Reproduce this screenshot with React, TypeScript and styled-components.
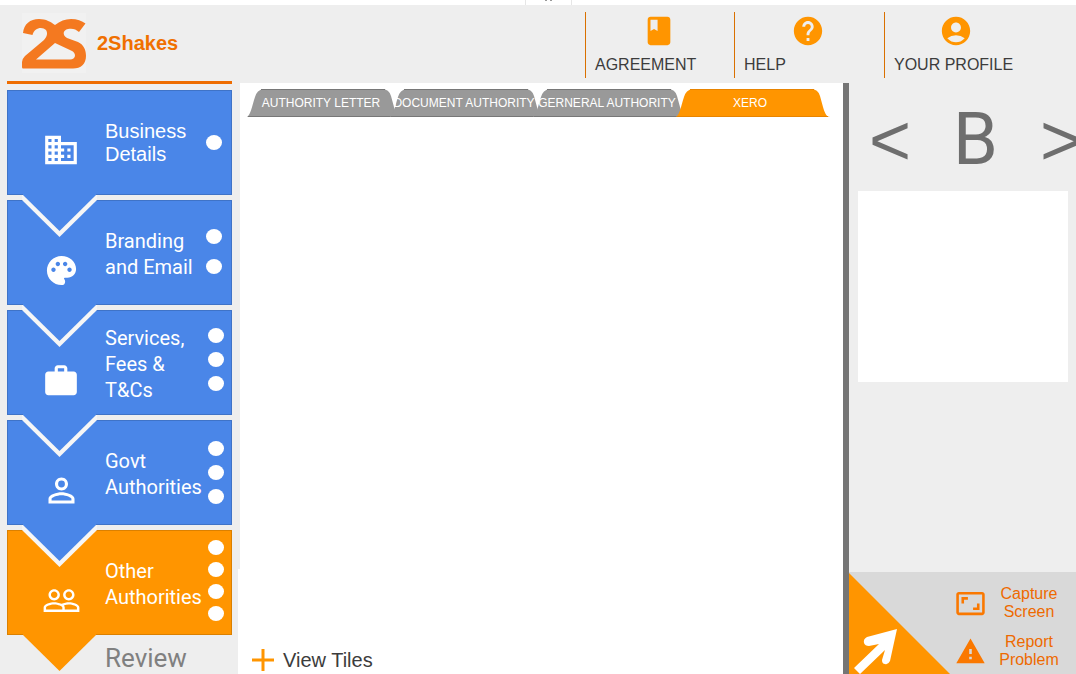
import React from 'react';
import styled, { createGlobalStyle } from 'styled-components';
import {
  MdDomain,
  MdPalette,
  MdWork,
  MdPersonOutline,
  MdPeopleOutline,
  MdBook,
  MdHelp,
  MdAccountCircle,
  MdAspectRatio,
  MdWarning,
} from 'react-icons/md';

const blue = '#4a86e8';
const orange = '#ff9500';
const sans = '"Liberation Sans", Arial, sans-serif';
const roboto = 'Roboto, Arial, sans-serif';

const GlobalStyle = createGlobalStyle`
  * { box-sizing: border-box; }
  body { margin: 0; background: #fff; font-family: ${sans}; overflow-x: hidden; }
  button { border: 0; padding: 0; margin: 0; background: none; color: inherit; font: inherit; cursor: pointer; }
  a { color: inherit; text-decoration: none; }
  svg { display: block; flex: none; }
`;

const Page = styled.div`
  display: flex;
  flex-direction: column;
  min-height: 100vh;
`;

const TopStrip = styled.div`
  display: flex;
  justify-content: center;
  height: 5px;
  padding-left: 20px;
`;

const StripHandle = styled.div`
  display: flex;
  justify-content: center;
  gap: 3px;
  width: 47px;
  height: 5px;
  border: solid #e6e6e6;
  border-width: 0 1px;
`;

const HandleMark = styled.i`
  width: 2px;
  height: 1px;
  background: #999;
`;

const Shell = styled.div`
  flex: 1;
  display: grid;
  grid-template-columns: 240px minmax(0, 1fr);
  background: #eee;
`;

const Sidebar = styled.aside`
  padding: 0 8px 0 7px;
`;

const Brand = styled.a`
  display: flex;
  align-items: center;
  gap: 11px;
  height: 79px;
  padding-left: 15px;
  border-bottom: 3px solid #ee6c00;
  color: #f07000;
  font: bold 20px/24px ${sans};
`;

const Steps = styled.nav`
  display: flex;
  flex-direction: column;
  gap: 5px;
  padding-top: 6px;
`;

const Step = styled.button<{ $color: string }>`
  position: relative;
  display: flex;
  align-items: center;
  width: 225px;
  height: 105px;
  background: ${(p) => p.$color};
  box-shadow: inset 0 0 0 1px rgba(0, 0, 0, 0.14);
  color: #fff;
  text-align: left;
`;

const StepIcon = styled.span<{ $high?: boolean }>`
  display: flex;
  justify-content: center;
  width: 108px;
  padding-top: ${(p) => (p.$high ? 14 : 36)}px;
  margin-right: -10px;
`;

const StepLabel = styled.span<{ $plain?: boolean }>`
  flex: 1;
  padding-top: ${(p) => (p.$plain ? 0 : 2)}px;
  white-space: pre-line;
  font: ${(p) => (p.$plain ? `20px/23px ${sans}` : `20px/26px ${roboto}`)};
`;

const Dots = styled.span<{ $gap: number; $inset: number; $lift: number }>`
  position: absolute;
  top: 0;
  bottom: ${(p) => p.$lift}px;
  right: ${(p) => p.$inset}px;
  display: flex;
  flex-direction: column;
  justify-content: center;
  gap: ${(p) => p.$gap}px;
`;

const Dot = styled.i`
  width: 16px;
  height: 15px;
  border-radius: 50%;
  background: #fff;
`;

const StepPointer = styled.svg`
  position: absolute;
  z-index: 1;
  top: 104px;
  left: 15px;
`;

const Review = styled.a`
  display: block;
  padding: 8px 0 0 98px;
  color: #808080;
  font: 26px/30px ${roboto};
`;

const Content = styled.div`
  display: flex;
  flex-direction: column;
`;

const Header = styled.header`
  display: flex;
  justify-content: flex-end;
  height: 78px;
  padding: 7px 0 5px;
`;

const HeaderLink = styled.a<{ $width: number; $last?: boolean }>`
  display: flex;
  flex-direction: column;
  align-items: center;
  gap: 7px;
  width: ${(p) => p.$width}px;
  padding: 2px ${(p) => (p.$last ? 49 : 3)}px 0 0;
  border-left: 1px solid #d97000;
  color: ${orange};
`;

const HeaderText = styled.span`
  align-self: flex-start;
  padding-left: 9px;
  color: #3c3c3c;
  font: 16px/20px ${sans};
`;

const Workspace = styled.div`
  flex: 1;
  display: flex;
`;

const Main = styled.main`
  flex: 1;
  display: flex;
  flex-direction: column;
  justify-content: space-between;
  background: #fff;
`;

const Tabs = styled.div`
  display: flex;
  padding: 6px 0 0 7px;
`;

const Tab = styled.button`
  position: relative;
  width: 154px;
  height: 28px;
  margin-right: -11px;
`;

const TabShape = styled.svg`
  position: absolute;
  inset: 0;
`;

const TabText = styled.span`
  position: relative;
  display: block;
  padding-right: 6px;
  color: #fff;
  font: 12px/14px ${sans};
  white-space: nowrap;
`;

const TilesBar = styled.footer`
  display: flex;
  align-items: flex-end;
  height: 105px;
  margin-left: -2px;
  padding: 0 0 2px 14px;
  background: #fff;
`;

const TilesButton = styled.button`
  display: flex;
  align-items: center;
  gap: 9px;
  color: #3c3c3c;
  font: 20px/24px ${sans};
`;

const Panel = styled.aside`
  display: flex;
  flex-direction: column;
  justify-content: space-between;
  width: 233px;
  border-left: 6px solid #757575;
  overflow: hidden;
`;

const Pager = styled.div`
  display: flex;
  justify-content: space-between;
  align-items: center;
  width: 213px;
  height: 108px;
  margin-left: 20px;
  padding-top: 5px;
  color: #6e6e6e;
  font: 72px/84px ${sans};
`;

const PagerLetter = styled.span`
  font-family: ${roboto};
`;

const Preview = styled.div`
  height: 191px;
  margin: 0 8px 0 9px;
  background: #fff;
`;

const Tools = styled.footer`
  display: flex;
  justify-content: space-between;
  height: 102px;
  background: #d9d9d9;
`;

const ToolList = styled.div`
  display: flex;
  flex-direction: column;
  gap: 12px;
  padding: 13px 16px 0 0;
`;

const ToolButton = styled.button`
  display: flex;
  align-items: center;
  gap: 12px;
  color: #ee6a00;
  font: 16px/18px ${sans};

  svg {
    color: #fa7800;
  }
`;

const ToolText = styled.span`
  width: 62px;
`;

const steps = [
  { label: 'Business\nDetails', icon: <MdDomain size={38} />, dots: 1, gap: 0, inset: 10, lift: 0, plain: true },
  { label: 'Branding\nand Email', icon: <MdPalette size={35} />, dots: 2, gap: 15, inset: 10, lift: 2 },
  { label: 'Services,\nFees &\nT&Cs', icon: <MdWork size={38} />, dots: 3, gap: 9, inset: 8, lift: 6 },
  { label: 'Govt\nAuthorities', icon: <MdPersonOutline size={39} />, dots: 3, gap: 9, inset: 8, lift: 0 },
  {
    label: 'Other\nAuthorities',
    icon: <MdPeopleOutline size={39} />,
    dots: 4,
    gap: 7,
    inset: 8,
    lift: 4,
    current: true,
  },
];

const tabs = ['AUTHORITY LETTER', 'DOCUMENT AUTHORITY', 'GERNERAL AUTHORITY', 'XERO'];

const Logo = () => (
  <svg width="64" height="60" viewBox="0 0 64 60">
    <rect width="64" height="60" fill="#f1f1f1" />
    <path
      fill="#f47920"
      fillRule="evenodd"
      d="M1 20C2 11 8 6 17 6C24 6 29 9 33 12C38 8 43 6 49 6C55 6 60 8 63.500 10.500L57 19C54 16 50 15 46 16C41 17 40 22 45 25L56 29C62 32 64 37 64 43C64 51 59 55.500 51 55.500H1Q0 55.500 0 54V49Q0 46 3 43L22 27C25 24 26 20 24 17C20 13 12 15 10.500 22ZM33 30L14 46.500H48C54 46.500 55 40 49 37.500Z"
    />
  </svg>
);

export default function App() {
  return (
    <Page>
      <GlobalStyle />
      <TopStrip>
        <StripHandle>
          <HandleMark />
          <HandleMark />
        </StripHandle>
      </TopStrip>
      <Shell>
        <Sidebar>
          <Brand href="#home">
            <Logo />
            2Shakes
          </Brand>
          <Steps>
            {steps.map((s) => {
              const color = s.current ? orange : blue;
              return (
                <Step key={s.label} $color={color}>
                  <StepIcon $high={s.plain}>{s.icon}</StepIcon>
                  <StepLabel $plain={s.plain}>{s.label}</StepLabel>
                  <Dots $gap={s.gap} $inset={s.inset} $lift={s.lift}>
                    {Array.from({ length: s.dots }, (_, i) => (
                      <Dot key={i} />
                    ))}
                  </Dots>
                  <StepPointer width="76" height="44" viewBox="0 0 76 44">
                    {!s.current && <path d="M0 1H75V6L37.500 43L0 6Z" fill="#f6f6f6" />}
                    <path d="M1 0H74V1L37.500 37L1 1Z" fill={color} />
                  </StepPointer>
                </Step>
              );
            })}
          </Steps>
          <Review href="#review">Review</Review>
        </Sidebar>
        <Content>
          <Header>
            <HeaderLink href="#agreement" $width={149}>
              <MdBook size={34} />
              <HeaderText>AGREEMENT</HeaderText>
            </HeaderLink>
            <HeaderLink href="#help" $width={150}>
              <MdHelp size={34} />
              <HeaderText>HELP</HeaderText>
            </HeaderLink>
            <HeaderLink href="#profile" $width={192} $last>
              <MdAccountCircle size={34} />
              <HeaderText>YOUR PROFILE</HeaderText>
            </HeaderLink>
          </Header>
          <Workspace>
            <Main>
              <Tabs role="tablist">
                {tabs.map((t) => {
                  const active = t === 'XERO';
                  return (
                    <Tab key={t} role="tab" aria-selected={active}>
                      <TabShape width="154" height="28" viewBox="0 0 154 28">
                        <path
                          d="M0 28C4 25 5 17 8 8Q10 1 16 0H135Q142 0 144 7L147 18C149 25 151 28 154 28Z"
                          fill={active ? orange : '#999'}
                        />
                        <path
                          d="M14 .5H138M1 27.500H152"
                          fill="none"
                          stroke={active ? '#e88400' : '#777'}
                        />
                      </TabShape>
                      <TabText>{t}</TabText>
                    </Tab>
                  );
                })}
              </Tabs>
              <TilesBar>
                <TilesButton>
                  <svg width="22" height="22" viewBox="0 0 22 22">
                    <path d="M11 0V22M0 11H22" stroke={orange} strokeWidth="3" />
                  </svg>
                  View Tiles
                </TilesButton>
              </TilesBar>
            </Main>
            <Panel>
              <div>
                <Pager>
                  <button aria-label="Previous">&lt;</button>
                  <PagerLetter>B</PagerLetter>
                  <button aria-label="Next">&gt;</button>
                </Pager>
                <Preview />
              </div>
              <Tools>
                <svg width="102" height="102" viewBox="0 0 102 102">
                  <path d="M0 1L101 102H0Z" fill={orange} />
                  <path
                    d="M48 57L18 65Q14 67 15 71Q16 74 20 74L30 72L5 96L11 102L36 78L33 88Q33 92 36 92Q39 93 41 89Z"
                    fill="#fff"
                  />
                </svg>
                <ToolList>
                  <ToolButton>
                    <MdAspectRatio size={31} />
                    <ToolText>Capture Screen</ToolText>
                  </ToolButton>
                  <ToolButton>
                    <MdWarning size={31} />
                    <ToolText>Report Problem</ToolText>
                  </ToolButton>
                </ToolList>
              </Tools>
            </Panel>
          </Workspace>
        </Content>
      </Shell>
    </Page>
  );
}
